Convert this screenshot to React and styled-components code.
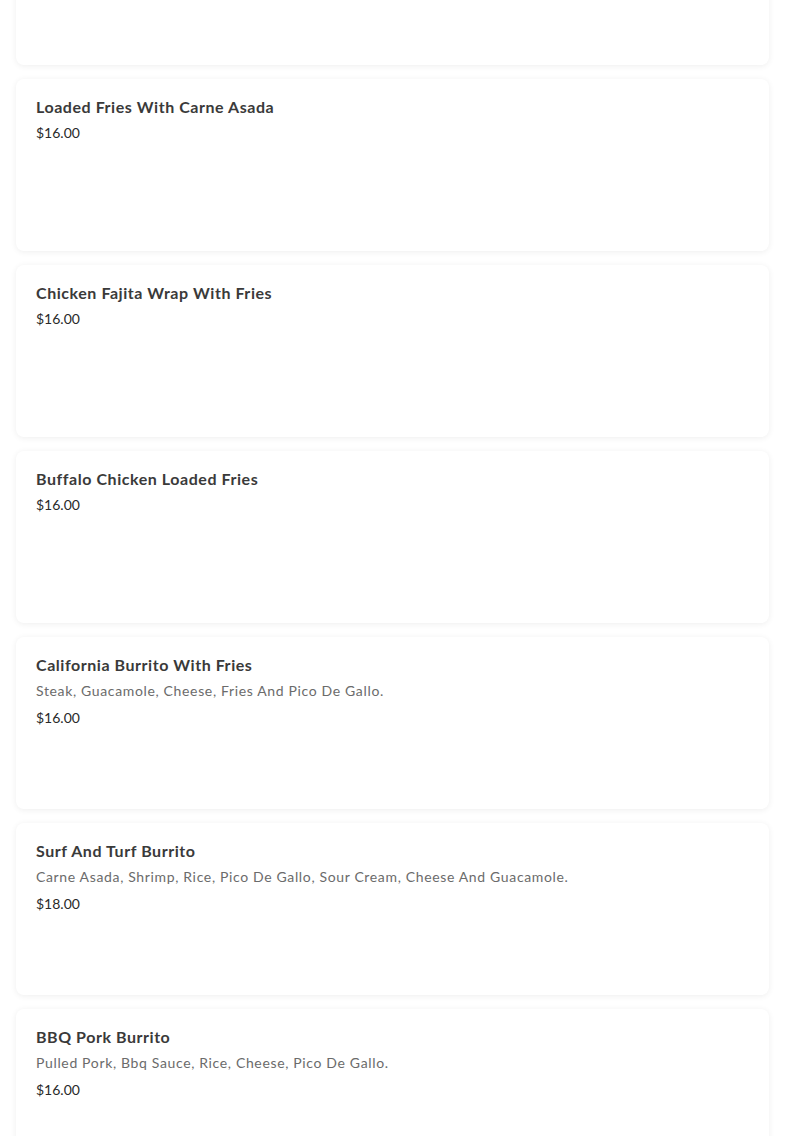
import React from "react";
import styled, { createGlobalStyle } from "styled-components";

const GlobalStyle = createGlobalStyle`
  body {
    margin: 0;
    background: #ffffff;
    font-family: "Lato", "Open Sans", sans-serif;
    overflow: hidden;
  }
`;

const items = [
  { title: "Loaded Fries With Carne Asada", price: "$16.00" },
  { title: "Chicken Fajita Wrap With Fries", price: "$16.00" },
  { title: "Buffalo Chicken Loaded Fries", price: "$16.00" },
  {
    title: "California Burrito With Fries",
    description: "Steak, Guacamole, Cheese, Fries And Pico De Gallo.",
    price: "$16.00",
  },
  {
    title: "Surf And Turf Burrito",
    description:
      "Carne Asada, Shrimp, Rice, Pico De Gallo, Sour Cream, Cheese And Guacamole.",
    price: "$18.00",
  },
  {
    title: "BBQ Pork Burrito",
    description: "Pulled Pork, Bbq Sauce, Rice, Cheese, Pico De Gallo.",
    price: "$16.00",
  },
];

const MenuItem = ({ title, description, price }) => {
  return (
    <Card>
      <Title>{title}</Title>
      {description && <Description>{description}</Description>}
      <Price $hasDescription={!!description}>{price}</Price>
    </Card>
  );
};

const App = () => {
  return (
    <>
      <GlobalStyle />
      <List>
        {/* previous item, scrolled mostly out of view */}
        <Card />
        {items.map((item) => (
          <MenuItem key={item.title} {...item} />
        ))}
      </List>
    </>
  );
};

export default App;

const List = styled.div`
  display: flex;
  flex-direction: column;
  gap: 14px;
  padding: 0 16px;
  margin-top: -107px;
`;

const Card = styled.div`
  box-sizing: border-box;
  height: 172px;
  flex-shrink: 0;
  padding: 16px 20px;
  background-color: white;
  border-radius: 8px;
  box-shadow: 0 1px 6px rgba(0, 0, 0, 0.07);
`;

const Title = styled.div`
  font-size: 16px;
  line-height: 24px;
  font-weight: 700;
  color: #3a3a3a;
  letter-spacing: 0.55px;
`;

const Description = styled.div`
  margin-top: 4px;
  font-size: 14px;
  line-height: 20px;
  color: #6b6b6b;
  letter-spacing: 0.65px;
`;

const Price = styled.div`
  margin-top: ${(p) => (p.$hasDescription ? "7px" : "4px")};
  font-size: 14px;
  line-height: 20px;
  color: #2a2a2a;
`;
